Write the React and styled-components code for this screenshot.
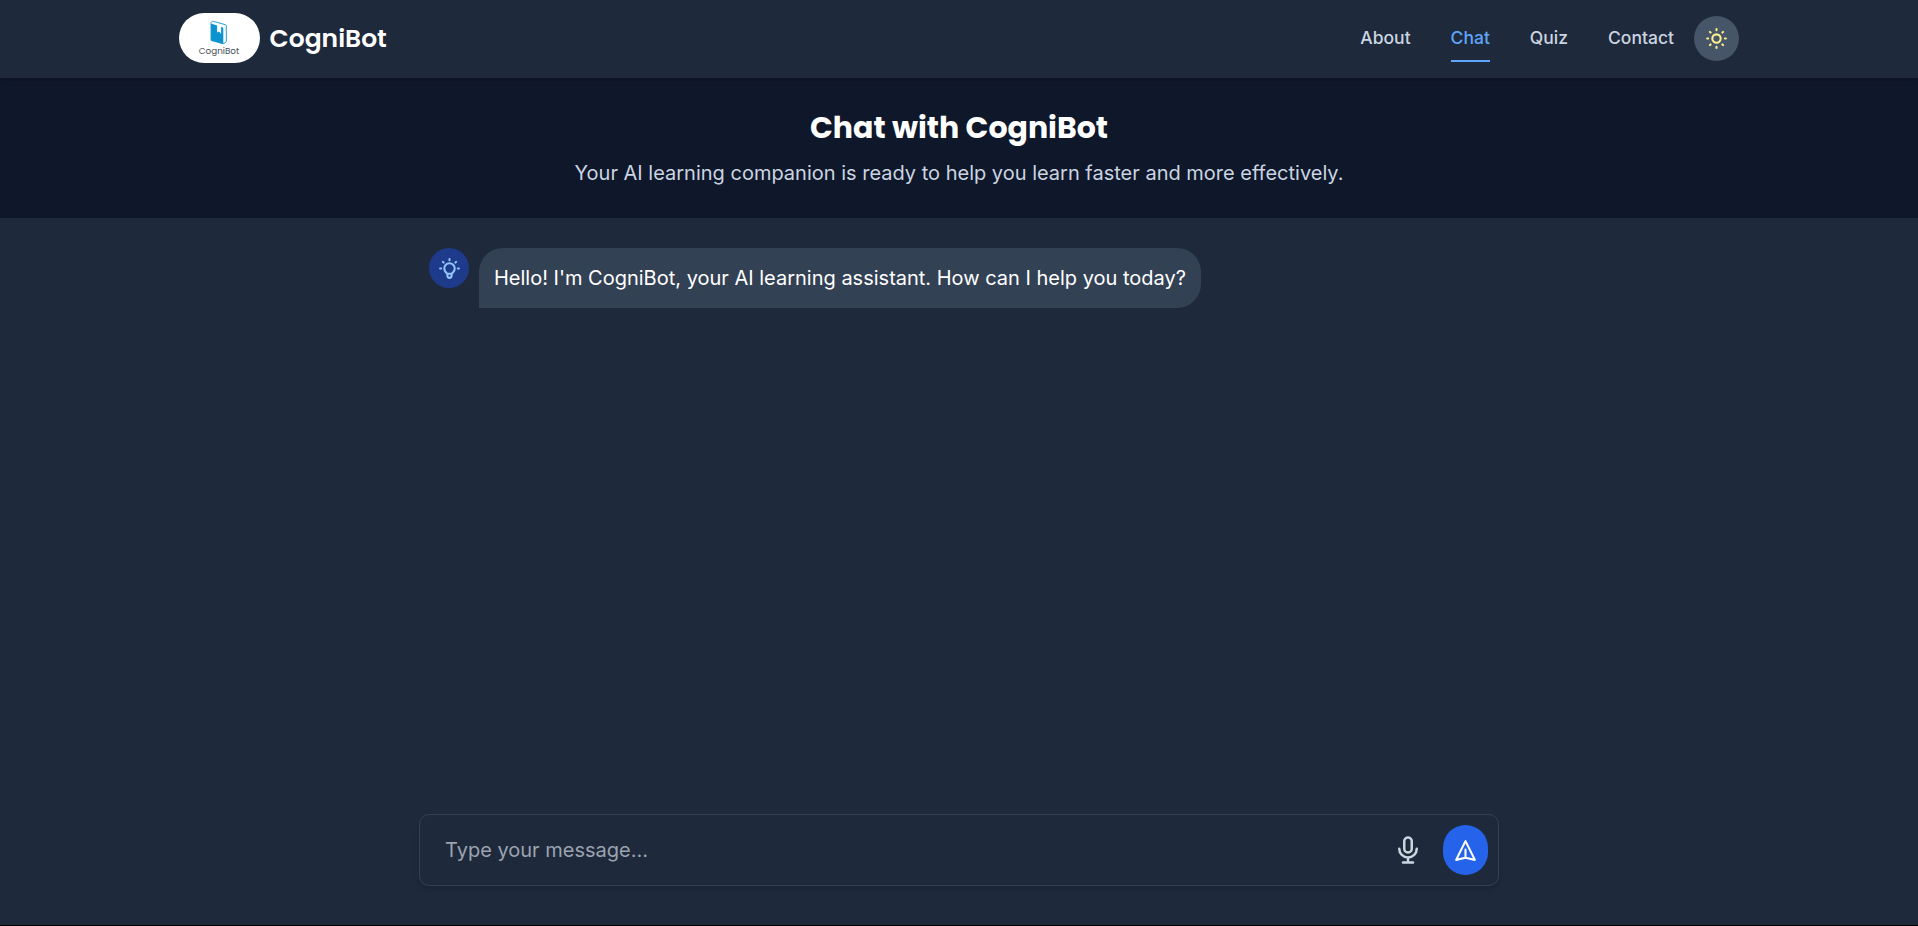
import React from "react";
import styled, { createGlobalStyle } from "styled-components";

const GlobalStyle = createGlobalStyle`
  *, *::before, *::after { box-sizing: border-box; }
  html { font-size: 20px; }
  body {
    margin: 0;
    background: #000;
    color: #fff;
    font-family: Inter, "Liberation Sans", sans-serif;
    line-height: 1.5;
  }
  button, input { font: inherit; }
`;

const Page = styled.div`
  display: flex;
  flex-direction: column;
  height: 925px;
  background: #1e293b;
`;

const Header = styled.header`
  position: relative;
  z-index: 1;
  display: flex;
  justify-content: center;
  height: 78px;
  background: #1e293b;
  box-shadow: 0 4px 6px -1px rgba(0, 0, 0, 0.1), 0 2px 4px -2px rgba(0, 0, 0, 0.1);
`;

const HeaderInner = styled.div`
  display: flex;
  align-items: center;
  justify-content: space-between;
  width: 1560px;
  padding-bottom: 1px;
`;

const Brand = styled.a`
  display: flex;
  align-items: center;
  gap: 9.5px;
  margin-bottom: 1px;
  color: #fff;
`;

const LogoPill = styled.span`
  display: flex;
  flex-direction: column;
  align-items: center;
  width: 81px;
  height: 50px;
  padding: 7px 1px 0 0;
  border-radius: 25px;
  background: #fff;
`;

const LogoName = styled.span`
  font-family: Poppins, Lato, sans-serif;
  font-size: 8.8px;
  line-height: 12px;
  color: #4b4f58;
`;

const BrandName = styled.span`
  font-family: Poppins, Inter, sans-serif;
  font-size: 25px;
  font-weight: 600;
  line-height: 35px;
`;

const Nav = styled.nav`
  display: flex;
  align-items: center;
  gap: 20px;
`;

const NavLinks = styled.div`
  display: flex;
  gap: 40px;
`;

const NavLink = styled.a`
  padding: 8px 0 9px;
  border-bottom: 2px solid ${(p) => (p.$active ? "#60a5fa" : "transparent")};
  color: ${(p) => (p.$active ? "#60a5fa" : "#cbd5e1")};
  font-size: 17.5px;
  font-weight: 500;
  line-height: 27px;
`;

const ThemeToggle = styled.button`
  display: flex;
  align-items: center;
  justify-content: center;
  width: 45px;
  height: 45px;
  padding: 0;
  border: 0;
  border-radius: 50%;
  background: #475569;
  color: #fef08a;
`;

const Hero = styled.section`
  height: 140px;
  padding-top: 30px;
  background: #0f172a;
  text-align: center;
`;

const Title = styled.h1`
  margin: 0;
  font-family: Poppins, Inter, sans-serif;
  font-size: 30px;
  font-weight: 700;
  line-height: 40px;
`;

const Subtitle = styled.p`
  margin: 10px 0 0;
  color: #cbd5e1;
  font-size: 20px;
  line-height: 30px;
`;

const ChatArea = styled.main`
  display: flex;
  flex: 1;
  flex-direction: column;
  justify-content: space-between;
  width: 1080px;
  margin: 0 auto;
  padding: 30px 0 39px;
`;

const Message = styled.div`
  display: flex;
  align-items: flex-start;
  gap: 10px;
  padding-left: 10px;
`;

const Avatar = styled.div`
  display: flex;
  align-items: center;
  justify-content: center;
  width: 40px;
  height: 40px;
  border-radius: 50%;
  background: #1e3a8a;
  color: #93c5fd;
`;

const Bubble = styled.div`
  padding: 15px;
  border-radius: 24px 24px 24px 0;
  background: #334155;
  font-size: 20px;
  line-height: 30px;
  white-space: nowrap;
`;

const Composer = styled.form`
  display: flex;
  align-items: center;
  height: 72px;
  padding: 0 10px 0 25px;
  border: 1px solid #334155;
  border-radius: 10px;
  box-shadow: 0 4px 6px -1px rgba(0, 0, 0, 0.1), 0 2px 4px -2px rgba(0, 0, 0, 0.1);
`;

const MessageInput = styled.input`
  flex: 1;
  padding: 0;
  border: 0;
  outline: 0;
  background: transparent;
  color: #fff;
  font-size: 20px;
  &::placeholder { color: #9ca3af; opacity: 1; }
`;

const MicButton = styled.button`
  display: flex;
  margin-right: 20px;
  padding: 0;
  border: 0;
  background: transparent;
  color: #cbd5e1;
`;

const SendButton = styled.button`
  display: flex;
  align-items: center;
  justify-content: center;
  width: 45px;
  height: 50px;
  padding: 0;
  border: 0;
  border-radius: 22.5px;
  background: #2563eb;
  color: #fff;
`;

const paths = {
  sun: "M12 3v1m0 16v1m9-9h-1M4 12H3m15.364 6.364l-.707-.707M6.343 6.343l-.707-.707m12.728 0l-.707.707M6.343 17.657l-.707.707M16 12a4 4 0 11-8 0 4 4 0 018 0z",
  bulb: "M9.663 17h4.673M12 3v1m6.364 1.636l-.707.707M21 12h-1M4 12H3m3.343-5.657l-.707-.707m2.828 9.9a5 5 0 117.072 0l-.548.547A3.374 3.374 0 0014 18.469V19a2 2 0 11-4 0v-.531c0-.895-.356-1.754-.988-2.386l-.548-.547z",
  mic: "M19 11a7 7 0 01-7 7m0 0a7 7 0 01-7-7m7 7v4m0 0H8m8 0h-4m0-8a3 3 0 01-3-3V5a3 3 0 116 0v6a3 3 0 01-3 3z",
  send: "M12 19l9 2-9-18-9 18 9-2zm0 0v-8",
};

function Icon({ name, size = 25 }) {
  return (
    <svg width={size} height={size} viewBox="0 0 24 24" fill="none" stroke="currentColor"
      strokeWidth="2" strokeLinecap="round" strokeLinejoin="round" aria-hidden="true">
      <path d={paths[name]} />
    </svg>
  );
}

function BookLogo() {
  return (
    <svg width="18" height="25" viewBox="0 0 18 25" aria-hidden="true">
      <path d="M1.1 3.6C.9 2 2 1.2 3.4 1.4L15.4 4.7Q16.3 5 16.3 6V21.3Q16.3 22 15.7 22.4L13 24" fill="#fff" stroke="#0b93cf" strokeWidth=".9" strokeLinejoin="round" />
      <path d="M.6 3Q1.2 3.8 2.4 4.1L7.1 5.6V12.6L9 11.5 11.1 14V6.8L12.4 7.2Q13.3 7.5 13.3 8.4V23.3Q13.3 24.4 12.2 24L1.6 21.1Q.6 20.8.6 19.8Z" fill="#0b93cf" />
    </svg>
  );
}

const links = ["About", "Chat", "Quiz", "Contact"];

export default function App() {
  return (
    <>
      <GlobalStyle />
      <Page>
        <Header>
          <HeaderInner>
            <Brand>
              <LogoPill>
                <BookLogo />
                <LogoName>CogniBot</LogoName>
              </LogoPill>
              <BrandName>CogniBot</BrandName>
            </Brand>
            <Nav>
              <NavLinks>
                {links.map((label) => (
                  <NavLink key={label} $active={label === "Chat"}>{label}</NavLink>
                ))}
              </NavLinks>
              <ThemeToggle aria-label="Toggle theme"><Icon name="sun" /></ThemeToggle>
            </Nav>
          </HeaderInner>
        </Header>
        <Hero>
          <Title>Chat with CogniBot</Title>
          <Subtitle>Your AI learning companion is ready to help you learn faster and more effectively.</Subtitle>
        </Hero>
        <ChatArea>
          <Message>
            <Avatar><Icon name="bulb" /></Avatar>
            <Bubble>Hello! I'm CogniBot, your AI learning assistant. How can I help you today?</Bubble>
          </Message>
          <Composer>
            <MessageInput placeholder="Type your message..." />
            <MicButton type="button" aria-label="Voice input"><Icon name="mic" size={30} /></MicButton>
            <SendButton type="button" aria-label="Send"><Icon name="send" /></SendButton>
          </Composer>
        </ChatArea>
      </Page>
    </>
  );
}
